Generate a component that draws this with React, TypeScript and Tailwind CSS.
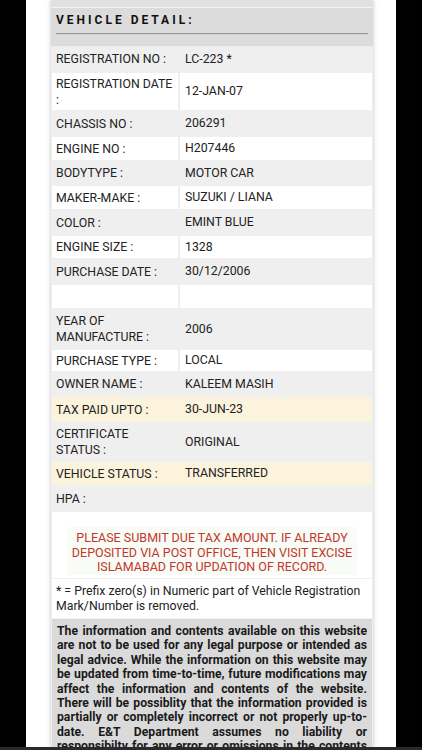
import React from 'react';

type Row = {
  label: string;
  value: string;
  tone: 'gray' | 'white' | 'yellow';
  h: string;
};

const rows: Row[] = [
  { label: 'REGISTRATION NO :', value: 'LC-223 *', tone: 'gray', h: 'h-[26px]' },
  { label: 'REGISTRATION DATE\n:', value: '12-JAN-07', tone: 'white', h: 'h-[37px]' },
  { label: 'CHASSIS NO :', value: '206291', tone: 'gray', h: 'h-[25px]' },
  { label: 'ENGINE NO :', value: 'H207446', tone: 'white', h: 'h-[23px]' },
  { label: 'BODYTYPE :', value: 'MOTOR CAR', tone: 'gray', h: 'h-[24px]' },
  { label: 'MAKER-MAKE :', value: 'SUZUKI / LIANA', tone: 'white', h: 'h-[23px]' },
  { label: 'COLOR :', value: 'EMINT BLUE', tone: 'gray', h: 'h-[25px]' },
  { label: 'ENGINE SIZE :', value: '1328', tone: 'white', h: 'h-[22px]' },
  { label: 'PURCHASE DATE :', value: '30/12/2006', tone: 'gray', h: 'h-[25px]' },
  { label: '', value: '', tone: 'white', h: 'h-[23px]' },
  { label: 'YEAR OF\nMANUFACTURE :', value: '2006', tone: 'gray', h: 'h-[40px]' },
  { label: 'PURCHASE TYPE :', value: 'LOCAL', tone: 'white', h: 'h-[21px]' },
  { label: 'OWNER NAME :', value: 'KALEEM MASIH', tone: 'gray', h: 'h-[24px]' },
  { label: 'TAX PAID UPTO :', value: '30-JUN-23', tone: 'yellow', h: 'h-[25px]' },
  { label: 'CERTIFICATE\nSTATUS :', value: 'ORIGINAL', tone: 'gray', h: 'h-[38px]' },
  { label: 'VEHICLE STATUS :', value: 'TRANSFERRED', tone: 'yellow', h: 'h-[23px]' },
  { label: 'HPA :', value: '', tone: 'gray', h: 'h-[26px]' },
];

function DetailRow({ row }: { row: Row }) {
  const rowBg = row.tone === 'yellow' ? 'bg-[#fbf3dc]' : 'bg-[#efefef]';
  const cellBg = row.tone === 'white' ? 'bg-white' : '';
  return (
    <div className={`flex gap-[2px] mb-[1px] ${rowBg} ${row.h}`}>
      <div
        className={`w-[126px] shrink-0 flex items-center pl-[4px] pr-[2px] leading-[16px] whitespace-pre-line ${cellBg}`}
      >
        {row.label}
      </div>
      <div className={`flex-1 flex items-center pl-[5px] ${cellBg}`}>{row.value}</div>
    </div>
  );
}

export default function App() {
  return (
    <div className="w-[422px] h-[750px] bg-black flex justify-center overflow-hidden relative font-['Roboto',sans-serif]">
      <div className="w-[370px] bg-white pl-[25px] pr-[23px]">
        <div className="bg-[#efefef] shadow-[0_0_4px_rgba(0,0,0,0.25)] text-[12.3px] text-[#222]">
          {/* top remainder of previous section */}
          <div className="h-[8px] bg-[#e1e1e1] border-b border-[#f2f2f2]" />

          {/* Section title */}
          <div className="bg-[#dcdcdc] px-[5px] pt-[4px] h-[38px]">
            <div className="font-bold text-[12px] tracking-[3px] text-[#111] leading-[16px]">
              VEHICLE DETAIL:
            </div>
            <div className="mt-[5px] h-[2px] bg-[#9a9a9a] border-b border-[#cfcfcf]" />
          </div>

          {/* Detail rows */}
          <div className="px-[1px] bg-[#efefef]">
            {rows.map((r, i) => (
              <DetailRow key={i} row={r} />
            ))}
          </div>

          {/* Tax notice */}
          <div className="bg-white mx-[1px] -mt-[1px] h-[66px] flex justify-center pt-[15px]">
            <div className="w-[290px] h-[48px] bg-[#f9fbf6] text-center text-[#c0392b] text-[12.5px] leading-[14.5px] pt-[4px]">
              PLEASE SUBMIT DUE TAX AMOUNT. IF ALREADY DEPOSITED VIA POST OFFICE, THEN VISIT EXCISE
              ISLAMABAD FOR UPDATION OF RECORD.
            </div>
          </div>

          <div className="bg-white mx-[1px] mt-[1px] px-[4px] pt-[5px] pb-[4px] text-[12.3px] leading-[15px] text-[#222]">
            * = Prefix zero(s) in Numeric part of Vehicle Registration Mark/Number is removed.
          </div>

          {/* Disclaimer */}
          <div className="bg-[#dadada] mx-[1px] mt-[1px] px-[5px] pt-[5px] pb-[10px] text-[12.2px] leading-[14.4px] font-bold text-[#1a1a1a] text-justify">
            The information and contents available on this website are not to be used for any legal
            purpose or intended as legal advice. While the information on this website may be updated
            from time-to-time, future modifications may affect the information and contents of the
            website. There will be possiblity that the information provided is partially or completely
            incorrect or not properly up-to-date. E&amp;T Department assumes no liability or
            responsibilty for any error or omissions in the contents of this website.
          </div>
        </div>
      </div>
      <div className="absolute left-0 right-0 bottom-0 h-[3px] bg-[#2a2a2a]" />
    </div>
  );
}
